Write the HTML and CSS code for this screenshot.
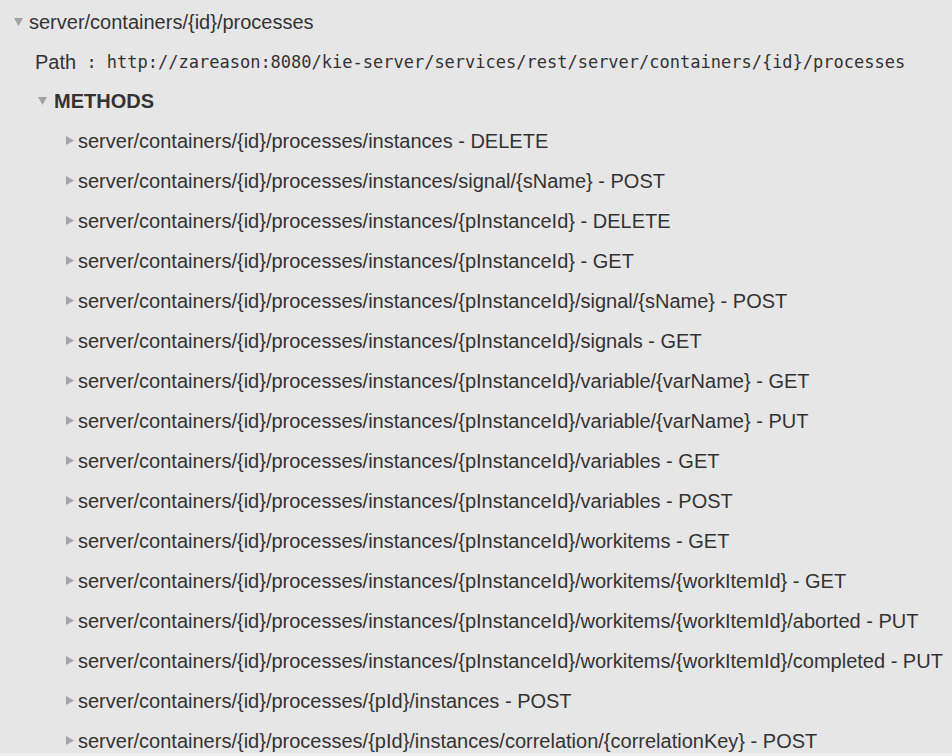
FILE: index.html
```html
<!DOCTYPE html>
<html>
<head>
<meta charset="utf-8">
<link rel="stylesheet" href="styles.css">
</head>
<body>
<div class="tree">
  <div class="row lvl0">
    <svg class="tri down" width="9" height="8" viewBox="0 0 9 8"><polygon points="0,0 9,0 4.5,8" /></svg>
    <span class="label">server/containers/{id}/processes</span>
  </div>
  <div class="row path">
    <span class="label">Path</span><span class="mono"> : http://zareason:8080/kie-server/services/rest/server/containers/{id}/processes</span>
  </div>
  <div class="row lvl1">
    <svg class="tri down" width="9" height="8" viewBox="0 0 9 8"><polygon points="0,0 9,0 4.5,8" /></svg>
    <span class="label bold">METHODS</span>
  </div>
  <div class="methods">
    <div class="row lvl2"><svg class="tri right" width="8" height="9" viewBox="0 0 8 9"><polygon points="0,0 8,4.5 0,9" /></svg><span class="label">server/containers/{id}/processes/instances - DELETE</span></div>
    <div class="row lvl2"><svg class="tri right" width="8" height="9" viewBox="0 0 8 9"><polygon points="0,0 8,4.5 0,9" /></svg><span class="label">server/containers/{id}/processes/instances/signal/{sName} - POST</span></div>
    <div class="row lvl2"><svg class="tri right" width="8" height="9" viewBox="0 0 8 9"><polygon points="0,0 8,4.5 0,9" /></svg><span class="label">server/containers/{id}/processes/instances/{pInstanceId} - DELETE</span></div>
    <div class="row lvl2"><svg class="tri right" width="8" height="9" viewBox="0 0 8 9"><polygon points="0,0 8,4.5 0,9" /></svg><span class="label">server/containers/{id}/processes/instances/{pInstanceId} - GET</span></div>
    <div class="row lvl2"><svg class="tri right" width="8" height="9" viewBox="0 0 8 9"><polygon points="0,0 8,4.5 0,9" /></svg><span class="label">server/containers/{id}/processes/instances/{pInstanceId}/signal/{sName} - POST</span></div>
    <div class="row lvl2"><svg class="tri right" width="8" height="9" viewBox="0 0 8 9"><polygon points="0,0 8,4.5 0,9" /></svg><span class="label">server/containers/{id}/processes/instances/{pInstanceId}/signals - GET</span></div>
    <div class="row lvl2"><svg class="tri right" width="8" height="9" viewBox="0 0 8 9"><polygon points="0,0 8,4.5 0,9" /></svg><span class="label">server/containers/{id}/processes/instances/{pInstanceId}/variable/{varName} - GET</span></div>
    <div class="row lvl2"><svg class="tri right" width="8" height="9" viewBox="0 0 8 9"><polygon points="0,0 8,4.5 0,9" /></svg><span class="label">server/containers/{id}/processes/instances/{pInstanceId}/variable/{varName} - PUT</span></div>
    <div class="row lvl2"><svg class="tri right" width="8" height="9" viewBox="0 0 8 9"><polygon points="0,0 8,4.5 0,9" /></svg><span class="label">server/containers/{id}/processes/instances/{pInstanceId}/variables - GET</span></div>
    <div class="row lvl2"><svg class="tri right" width="8" height="9" viewBox="0 0 8 9"><polygon points="0,0 8,4.5 0,9" /></svg><span class="label">server/containers/{id}/processes/instances/{pInstanceId}/variables - POST</span></div>
    <div class="row lvl2"><svg class="tri right" width="8" height="9" viewBox="0 0 8 9"><polygon points="0,0 8,4.5 0,9" /></svg><span class="label">server/containers/{id}/processes/instances/{pInstanceId}/workitems - GET</span></div>
    <div class="row lvl2"><svg class="tri right" width="8" height="9" viewBox="0 0 8 9"><polygon points="0,0 8,4.5 0,9" /></svg><span class="label">server/containers/{id}/processes/instances/{pInstanceId}/workitems/{workItemId} - GET</span></div>
    <div class="row lvl2"><svg class="tri right" width="8" height="9" viewBox="0 0 8 9"><polygon points="0,0 8,4.5 0,9" /></svg><span class="label">server/containers/{id}/processes/instances/{pInstanceId}/workitems/{workItemId}/aborted - PUT</span></div>
    <div class="row lvl2"><svg class="tri right" width="8" height="9" viewBox="0 0 8 9"><polygon points="0,0 8,4.5 0,9" /></svg><span class="label">server/containers/{id}/processes/instances/{pInstanceId}/workitems/{workItemId}/completed - PUT</span></div>
    <div class="row lvl2"><svg class="tri right" width="8" height="9" viewBox="0 0 8 9"><polygon points="0,0 8,4.5 0,9" /></svg><span class="label">server/containers/{id}/processes/{pId}/instances - POST</span></div>
    <div class="row lvl2"><svg class="tri right" width="8" height="9" viewBox="0 0 8 9"><polygon points="0,0 8,4.5 0,9" /></svg><span class="label">server/containers/{id}/processes/{pId}/instances/correlation/{correlationKey} - POST</span></div>
  </div>
</div>
<div class="hbar"></div>
</body>
</html>
```

FILE: styles.css
```css
html, body {
  margin: 0;
  padding: 0;
  background: #e7e6e6;
  overflow: hidden;
}
body {
  font-family: "Liberation Sans", Arial, sans-serif;
  font-size: 20px;
  color: #333333;
}
.tree {
  display: flex;
  flex-direction: column;
  padding-top: 1px;
}
.row {
  display: flex;
  align-items: center;
  height: 40px;
  box-sizing: border-box;
  white-space: nowrap;
}
.tri {
  flex: none;
  fill: #a3a3a3;
}
.lvl0 { padding-left: 14px; padding-top: 2px; }
.lvl0 .tri { margin-right: 6px; margin-top: 0; }
.path { padding-left: 35px; padding-top: 2px; }
.mono {
  font-family: "DejaVu Sans Mono", "Liberation Mono", monospace;
  font-size: 17px;
  white-space: pre;
}
.lvl1 { padding-left: 38px; }
.lvl1 .tri { margin-right: 7px; margin-top: -1px; }
.bold { font-weight: bold; }
.lvl2 { padding-left: 66px; }
.lvl2 .tri { margin-right: 4px; margin-top: -1px; }
.hbar {
  position: fixed;
  left: 0;
  right: 0;
  bottom: 0;
  height: 3px;
  background: #efeeee;
}
```
